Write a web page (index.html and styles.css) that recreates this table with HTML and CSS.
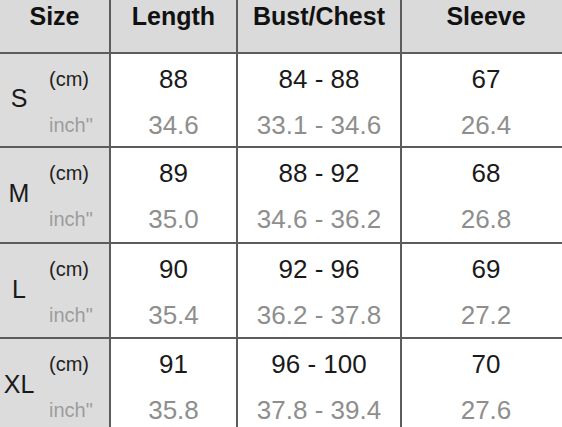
FILE: index.html
```html
<!DOCTYPE html>
<html>
<head>
<meta charset="utf-8">
<link rel="stylesheet" href="styles.css">
</head>
<body>
<div class="table">
  <div class="hd size-col">Size</div>
  <div class="hd">Length</div>
  <div class="hd">Bust/Chest</div>
  <div class="hd last">Sleeve</div>

  <div class="sz"><span class="letter">S</span><span class="units"><span class="cm">(cm)</span><span class="inch">inch"</span></span></div>
  <div class="val"><span class="cmv">88</span><span class="inv">34.6</span></div>
  <div class="val"><span class="cmv">84 - 88</span><span class="inv">33.1 - 34.6</span></div>
  <div class="val last"><span class="cmv">67</span><span class="inv">26.4</span></div>

  <div class="sz"><span class="letter">M</span><span class="units"><span class="cm">(cm)</span><span class="inch">inch"</span></span></div>
  <div class="val"><span class="cmv">89</span><span class="inv">35.0</span></div>
  <div class="val"><span class="cmv">88 - 92</span><span class="inv">34.6 - 36.2</span></div>
  <div class="val last"><span class="cmv">68</span><span class="inv">26.8</span></div>

  <div class="sz"><span class="letter">L</span><span class="units"><span class="cm">(cm)</span><span class="inch">inch"</span></span></div>
  <div class="val"><span class="cmv">90</span><span class="inv">35.4</span></div>
  <div class="val"><span class="cmv">92 - 96</span><span class="inv">36.2 - 37.8</span></div>
  <div class="val last"><span class="cmv">69</span><span class="inv">27.2</span></div>

  <div class="sz"><span class="letter">XL</span><span class="units"><span class="cm">(cm)</span><span class="inch">inch"</span></span></div>
  <div class="val"><span class="cmv">91</span><span class="inv">35.8</span></div>
  <div class="val"><span class="cmv">96 - 100</span><span class="inv">37.8 - 39.4</span></div>
  <div class="val last"><span class="cmv">70</span><span class="inv">27.6</span></div>
</div>
</body>
</html>
```
FILE: styles.css
```css
html, body {
  margin: 0;
  padding: 0;
  background: #ffffff;
  overflow: hidden;
}
body {
  width: 562px;
  height: 427px;
  font-family: "Liberation Sans", Arial, sans-serif;
}
.table {
  display: grid;
  grid-template-columns: 111px 127px 164px 168px;
  grid-template-rows: 54px 94px 96px 95px 95px;
  width: 570px;
}
.table > div {
  box-sizing: border-box;
  border-right: 2px solid #5c5c5c;
  border-bottom: 2px solid #5c5c5c;
}
.table > div.last {
  border-right: none;
}
.hd {
  background: #dadada;
  font-weight: bold;
  font-size: 25px;
  line-height: 32px;
  color: #111111;
  text-align: center;
}
.sz {
  background: #dcdcdc;
  display: flex;
  align-items: center;
}
.letter {
  width: 38px;
  text-align: center;
  font-size: 25px;
  color: #1a1a1a;
  line-height: 30px;
  margin-top: -4px;
}
.units {
  margin-left: 11px;
  display: flex;
  flex-direction: column;
  align-self: stretch;
  padding-top: 2px;
}
.cm {
  font-size: 20px;
  line-height: 46px;
  color: #222222;
}
.inch {
  font-size: 20px;
  line-height: 46px;
  color: #9c9c9c;
}
.val {
  display: flex;
  flex-direction: column;
  align-items: center;
  padding-top: 2px;
  background: #ffffff;
}
.cmv {
  font-size: 26px;
  line-height: 46px;
  color: #1a1a1a;
}
.inv {
  font-size: 26px;
  line-height: 46px;
  color: #8e8e8e;
}
```
